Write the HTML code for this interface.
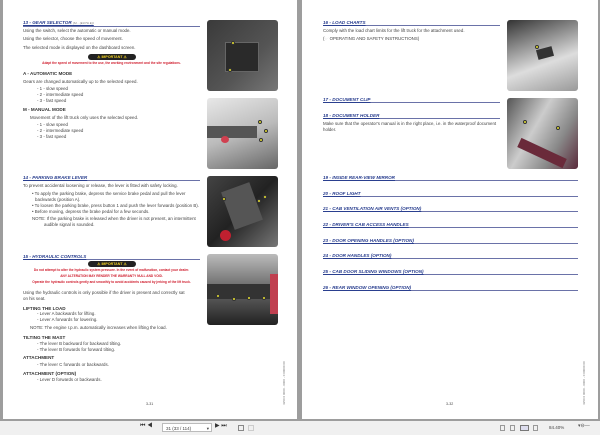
<!DOCTYPE html>
<html><head><meta charset="utf-8"><style>
*{margin:0;padding:0;box-sizing:border-box}
body{width:600px;height:435px;background:#9d9d9d;position:relative;overflow:hidden;font-family:"Liberation Sans",sans-serif;font-size:4.4px;color:#444}
.pg{position:absolute;top:0;height:419px;background:#fff}
.t{position:absolute;white-space:nowrap;line-height:5px}
.h{position:absolute;color:#2a3f8f;font-weight:bold;font-style:italic;font-size:4.6px;border-bottom:0.8px solid #6a72a8;line-height:5px;text-decoration:underline}
.b{font-weight:bold;color:#333;font-size:4.6px}
.r{color:#d02030;font-size:3.2px;font-weight:bold;width:177px;text-align:center;left:23px}
.img{position:absolute;border-radius:3px;overflow:hidden}
.dot{position:absolute;width:4px;height:4px;border-radius:50%;background:#e8e030;border:0.5px solid #333}
.imp{position:absolute;width:48px;height:6px;border-radius:3px;background:#222;color:#f0d020;font-size:3.6px;font-weight:bold;text-align:center;line-height:6px}
.tb{position:absolute;top:421px;left:0;width:600px;height:14px;background:#f0f0f0}
</style></head><body>
<div class="pg" style="left:3px;width:294px"></div>
<div class="pg" style="left:302px;width:296px"></div>

<!-- left page -->
<div class="h" style="left:23px;top:20px;width:177px">13 - GEAR SELECTOR <span style="font-size:3px;font-weight:normal;color:#777">(M... (EUTH E))</span></div>
<div class="t" style="left:23px;top:28px">Using the switch, select the automatic or manual mode.</div>
<div class="t" style="left:23px;top:36px">Using the selector, choose the speed of movement.</div>
<div class="t" style="left:23px;top:45px">The selected mode is displayed on the dashboard screen.</div>
<div class="imp" style="left:88px;top:54px">⚠ IMPORTANT ⚠</div>
<div class="t r" style="top:61px">Adapt the speed of movement to the use, the working environment and the site regulations.</div>
<div class="t b" style="left:23px;top:71px">A - AUTOMATIC MODE</div>
<div class="t" style="left:23px;top:79px">Gears are changed automatically up to the selected speed.</div>
<div class="t" style="left:37px;top:86px">- 1 - slow speed</div>
<div class="t" style="left:37px;top:92px">- 2 - intermediate speed</div>
<div class="t" style="left:37px;top:98px">- 3 - fast speed</div>
<div class="t b" style="left:23px;top:107px">M - MANUAL MODE</div>
<div class="t" style="left:30px;top:115px">Movement of the lift truck only uses the selected speed.</div>
<div class="t" style="left:37px;top:122px">- 1 - slow speed</div>
<div class="t" style="left:37px;top:128px">- 2 - intermediate speed</div>
<div class="t" style="left:37px;top:134px">- 3 - fast speed</div>

<div class="h" style="left:23px;top:175px;width:177px">14 - PARKING BRAKE LEVER</div>
<div class="t" style="left:23px;top:183px">To prevent accidental loosening or release, the lever is fitted with safety locking.</div>
<div class="t" style="left:32px;top:191px">• To apply the parking brake, depress the service brake pedal and pull the lever</div>
<div class="t" style="left:35px;top:197px">backwards (position A).</div>
<div class="t" style="left:32px;top:203px">• To loosen the parking brake, press button 1 and push the lever forwards (position B).</div>
<div class="t" style="left:32px;top:209px">• Before moving, depress the brake pedal for a few seconds.</div>
<div class="t" style="left:32px;top:216px">NOTE: If the parking brake is released when the driver is not present, an intermittent</div>
<div class="t" style="left:44px;top:222px">audible signal is sounded.</div>

<div class="h" style="left:23px;top:254px;width:177px">15 - HYDRAULIC CONTROLS</div>
<div class="imp" style="left:88px;top:261px">⚠ IMPORTANT ⚠</div>
<div class="t r" style="top:268px">Do not attempt to alter the hydraulic system pressure. In the event of malfunction, contact your dealer.</div>
<div class="t r" style="top:274px">ANY ALTERATION MAY RENDER THE WARRANTY NULL AND VOID.</div>
<div class="t r" style="top:280px">Operate the hydraulic controls gently and smoothly to avoid accidents caused by jerking of the lift truck.</div>
<div class="t" style="left:23px;top:290px">Using the hydraulic controls is only possible if the driver is present and correctly sat</div>
<div class="t" style="left:23px;top:296px">on his seat.</div>
<div class="t b" style="left:23px;top:306px">LIFTING THE LOAD</div>
<div class="t" style="left:37px;top:311px">- Lever A backwards for lifting.</div>
<div class="t" style="left:37px;top:317px">- Lever A forwards for lowering.</div>
<div class="t" style="left:30px;top:325px">NOTE: The engine r.p.m. automatically increases when lifting the load.</div>
<div class="t b" style="left:23px;top:335px">TILTING THE MAST</div>
<div class="t" style="left:37px;top:341px">- The lever B backward for backward tilting.</div>
<div class="t" style="left:37px;top:347px">- The lever B forwards for forward tilting.</div>
<div class="t b" style="left:23px;top:355px">ATTACHMENT</div>
<div class="t" style="left:37px;top:362px">- The lever C forwards or backwards.</div>
<div class="t b" style="left:23px;top:371px">ATTACHMENT (OPTION)</div>
<div class="t" style="left:37px;top:377px">- Lever D forwards or backwards.</div>
<div class="t" style="left:146px;top:402px;font-size:3.6px">3-31</div>
<div class="t" style="left:282px;top:405px;font-size:3px;transform:rotate(-90deg);transform-origin:left top;color:#777">4350 0 0000 - 0000 - 0 00000 00</div>

<div class="img" style="left:207px;top:20px;width:71px;height:71px;background:linear-gradient(135deg,#3a3a3a,#555 60%,#777)">
<div style="position:absolute;left:18px;top:22px;width:34px;height:30px;background:#2a2a2a;border:1px solid #666"></div><div class="dot" style="left:24px;top:21px"></div><div class="dot" style="left:21px;top:48px"></div></div>
<div class="img" style="left:207px;top:98px;width:71px;height:71px;background:linear-gradient(160deg,#e8e8e8,#bbb 50%,#666)">
<div style="position:absolute;left:0;top:28px;width:50px;height:12px;background:#555"></div><div style="position:absolute;left:14px;top:38px;width:8px;height:7px;border-radius:50%;background:#d04050"></div><div class="dot" style="left:51px;top:22px"></div><div class="dot" style="left:57px;top:31px"></div><div class="dot" style="left:52px;top:40px"></div></div>
<div class="img" style="left:207px;top:176px;width:71px;height:71px;background:linear-gradient(135deg,#444,#222 50%,#777)">
<div style="position:absolute;left:20px;top:10px;width:30px;height:40px;background:#555;transform:rotate(-20deg)"></div><div style="position:absolute;left:13px;top:54px;width:11px;height:11px;border-radius:50%;background:#c02030"></div><div class="dot" style="left:15px;top:21px"></div><div class="dot" style="left:50px;top:23px"></div><div class="dot" style="left:56px;top:19px"></div></div>
<div class="img" style="left:207px;top:254px;width:71px;height:71px;background:linear-gradient(180deg,#bbb,#666 50%,#222)">
<div style="position:absolute;left:0;top:30px;width:71px;height:15px;background:#333"></div><div class="dot" style="left:9px;top:40px"></div><div class="dot" style="left:25px;top:43px"></div><div class="dot" style="left:40px;top:42px"></div><div class="dot" style="left:55px;top:42px"></div><div style="position:absolute;right:0;top:20px;width:8px;height:40px;background:#c04050"></div></div>

<!-- right page -->
<div class="h" style="left:323px;top:20px;width:177px">16 - LOAD CHARTS</div>
<div class="t" style="left:323px;top:28px">Comply with the load chart limits for the lift truck for the attachment used.</div>
<div class="t" style="left:323px;top:36px">(☞ OPERATING AND SAFETY INSTRUCTIONS)</div>
<div class="h" style="left:323px;top:97px;width:177px">17 - DOCUMENT CLIP</div>
<div class="h" style="left:323px;top:113px;width:177px">18 - DOCUMENT HOLDER</div>
<div class="t" style="left:323px;top:121px">Make sure that the operator's manual is in the right place, i.e. in the waterproof document</div>
<div class="t" style="left:323px;top:127px">holder.</div>
<div class="h" style="left:323px;top:175px;width:255px">19 - INSIDE REAR-VIEW MIRROR</div>
<div class="h" style="left:323px;top:191px;width:255px">20 - ROOF LIGHT</div>
<div class="h" style="left:323px;top:206px;width:255px">21 - CAB VENTILATION AIR VENTS (OPTION)</div>
<div class="h" style="left:323px;top:222px;width:255px">22 - DRIVER'S CAB ACCESS HANDLES</div>
<div class="h" style="left:323px;top:238px;width:255px">23 - DOOR OPENING HANDLES (OPTION)</div>
<div class="h" style="left:323px;top:253px;width:255px">24 - DOOR HANDLES (OPTION)</div>
<div class="h" style="left:323px;top:269px;width:255px">25 - CAB DOOR SLIDING WINDOWS (OPTION)</div>
<div class="h" style="left:323px;top:285px;width:255px">26 - REAR WINDOW OPENING (OPTION)</div>
<div class="t" style="left:446px;top:402px;font-size:3.6px">3-32</div>
<div class="t" style="left:582px;top:405px;font-size:3px;transform:rotate(-90deg);transform-origin:left top;color:#777">4350 0 0000 - 0000 - 0 00000 00</div>

<div class="img" style="left:507px;top:20px;width:71px;height:71px;background:linear-gradient(160deg,#333,#888 30%,#ddd 60%,#999)">
<div style="position:absolute;left:30px;top:28px;width:16px;height:10px;background:#333;transform:rotate(-15deg)"></div><div class="dot" style="left:28px;top:25px"></div></div>
<div class="img" style="left:507px;top:98px;width:71px;height:71px;background:linear-gradient(120deg,#555,#ccc 40%,#888 70%,#5a2a3a)">
<div style="position:absolute;left:10px;top:50px;width:50px;height:10px;background:#6a2a3a;transform:rotate(25deg)"></div><div class="dot" style="left:16px;top:22px"></div><div class="dot" style="left:49px;top:28px"></div></div>

<!-- toolbar -->
<div class="tb">
<div class="t" style="left:140px;top:3px;font-size:6px;color:#333">⏮ ◀</div>
<div style="position:absolute;left:162px;top:2px;width:50px;height:9px;background:#fff;border:0.5px solid #bbb;font-size:4.5px;line-height:9px;padding-left:3px;color:#444">31 (33 / 114)<span style="position:absolute;right:2px">▾</span></div>
<div class="t" style="left:215px;top:3px;font-size:6px;color:#333">▶ ⏭</div>
<div style="position:absolute;left:238px;top:4px;width:6px;height:6px;border:0.6px solid #888"></div>
<div style="position:absolute;left:248px;top:4px;width:6px;height:6px;border:0.6px solid #ccc"></div>
<div style="position:absolute;left:500px;top:4px;width:5px;height:6px;border:0.6px solid #999"></div>
<div style="position:absolute;left:510px;top:4px;width:5px;height:6px;border:0.6px solid #999"></div>
<div style="position:absolute;left:520px;top:4px;width:9px;height:6px;border:0.6px solid #777;background:#dde"></div>
<div style="position:absolute;left:533px;top:4px;width:5px;height:6px;border:0.6px solid #999"></div>
<div class="t" style="left:549px;top:4px;font-size:4.5px;color:#444">84.40%</div>
<div class="t" style="left:578px;top:3px;font-size:5px;color:#555">▾⊖—</div>
</div>
</body></html>
